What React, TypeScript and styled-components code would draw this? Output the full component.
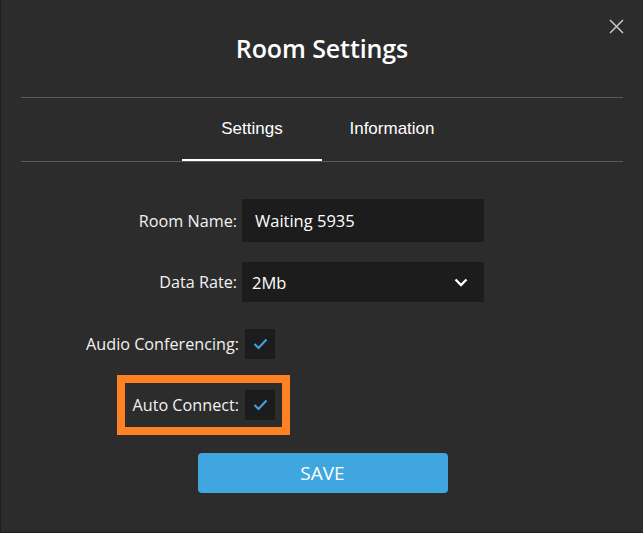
import React from 'react'
import styled, { createGlobalStyle } from 'styled-components'

const GlobalStyle = createGlobalStyle`
  html, body {
    margin: 0;
    padding: 0;
    background: #2c2c2c;
  }
  * { box-sizing: border-box; }
`

const Modal = styled.div`
  position: relative;
  width: 643px;
  height: 533px;
  background: #2c2c2c;
  border-left: 1px solid #1d1d1d;
  border-bottom: 1px solid #1d1d1d;
  font-family: 'Open Sans', 'Noto Sans', sans-serif;
  color: #fff;
  display: flex;
  flex-direction: column;
`

const CloseButton = styled.button`
  position: absolute;
  top: 17px;
  right: 18px;
  width: 18px;
  height: 18px;
  padding: 0;
  border: 0;
  background: none;
  color: #c8c8c8;
  cursor: pointer;
  display: flex;
  align-items: center;
  justify-content: center;
`

const Title = styled.h1`
  margin: 0;
  height: 97px;
  display: flex;
  align-items: center;
  justify-content: center;
  padding-bottom: 2px;
  font-size: 25px;
  font-weight: 600;
  letter-spacing: -0.1px;
`

const TabBar = styled.div`
  margin: 0 20px;
  border-top: 1px solid #5b5b5b;
  border-bottom: 1px solid #5b5b5b;
  display: flex;
  justify-content: center;
`

const Tab = styled.div<{ $active?: boolean }>`
  width: 140px;
  height: 63px;
  display: flex;
  align-items: center;
  justify-content: center;
  font-family: 'Liberation Sans', Arial, sans-serif;
  font-size: 17px;
  color: #fff;
  border-bottom: 2px solid ${p => (p.$active ? '#ffffff' : 'transparent')};
`

const Form = styled.div`
  display: flex;
  flex-direction: column;
  padding-top: 37px;
`

const FieldRow = styled.div<{ $gap: number }>`
  display: flex;
  align-items: center;
  gap: 5px;
  margin-bottom: ${p => p.$gap}px;
`

const Label = styled.label`
  width: 236px;
  text-align: right;
  font-size: 16.2px;
  color: #f2f2f2;
  white-space: nowrap;
`

const TextInput = styled.div<{ $h: number; $pad: number }>`
  width: 242px;
  height: ${p => p.$h}px;
  background: #1c1c1c;
  display: flex;
  align-items: center;
  justify-content: space-between;
  padding: 0 16px 0 ${p => p.$pad}px;
  font-size: 16.5px;
  color: #fff;
`

const CheckRow = styled.div<{ $gap: number }>`
  width: 274px;
  display: flex;
  justify-content: flex-end;
  margin-bottom: ${p => p.$gap}px;
`

const CheckGroup = styled.div<{ $highlight?: boolean }>`
  display: flex;
  align-items: center;
  gap: 6px;
  outline: ${p => (p.$highlight ? '8px solid #fe8224' : 'none')};
  outline-offset: 7px;
`

const CheckLabel = styled.span`
  font-size: 16.2px;
  color: #f2f2f2;
  white-space: nowrap;
`

const CheckBox = styled.span`
  width: 30px;
  height: 30px;
  background: #1c1c1c;
  display: flex;
  align-items: center;
  justify-content: center;
`

const SaveButton = styled.button`
  align-self: center;
  margin-left: 1px;
  width: 250px;
  height: 40px;
  border: 0;
  border-radius: 4px;
  background: #3fa6df;
  color: #fff;
  font-family: 'Open Sans', 'Noto Sans', sans-serif;
  font-size: 19px;
  font-weight: 500;
  cursor: pointer;
`

const Check = () => (
  <svg width="15" height="12" viewBox="0 0 15 12" fill="none">
    <path d="M1.5 6 L5.5 10 L13.5 1.5" stroke="#3da2dc" strokeWidth="2.2" />
  </svg>
)

const Chevron = () => (
  <svg width="14" height="9" viewBox="0 0 14 9" fill="none">
    <path d="M1.5 1.5 L7 7 L12.5 1.5" stroke="#fff" strokeWidth="2.4" />
  </svg>
)

const CloseIcon = () => (
  <svg width="15" height="15" viewBox="0 0 15 15" fill="none">
    <path d="M1 1 L14 14 M14 1 L1 14" stroke="currentColor" strokeWidth="1.5" />
  </svg>
)

const App: React.FC = () => {
  return (
    <>
      <GlobalStyle />
      <Modal>
        <CloseButton aria-label="Close">
          <CloseIcon />
        </CloseButton>
        <Title>Room Settings</Title>
        <TabBar>
          <Tab $active>Settings</Tab>
          <Tab>Information</Tab>
        </TabBar>

        <Form>
          <FieldRow $gap={20}>
            <Label>Room Name:</Label>
            <TextInput $h={43} $pad={13}>Waiting 5935</TextInput>
          </FieldRow>
          <FieldRow $gap={27}>
            <Label>Data Rate:</Label>
            <TextInput $h={40} $pad={10}>
              2Mb
              <Chevron />
            </TextInput>
          </FieldRow>
          <CheckRow $gap={31}>
            <CheckGroup>
              <CheckLabel>Audio Conferencing:</CheckLabel>
              <CheckBox>
                <Check />
              </CheckBox>
            </CheckGroup>
          </CheckRow>
          <CheckRow $gap={33}>
            <CheckGroup $highlight>
              <CheckLabel>Auto Connect:</CheckLabel>
              <CheckBox>
                <Check />
              </CheckBox>
            </CheckGroup>
          </CheckRow>
          <SaveButton>SAVE</SaveButton>
        </Form>
      </Modal>
    </>
  )
}

export default App
